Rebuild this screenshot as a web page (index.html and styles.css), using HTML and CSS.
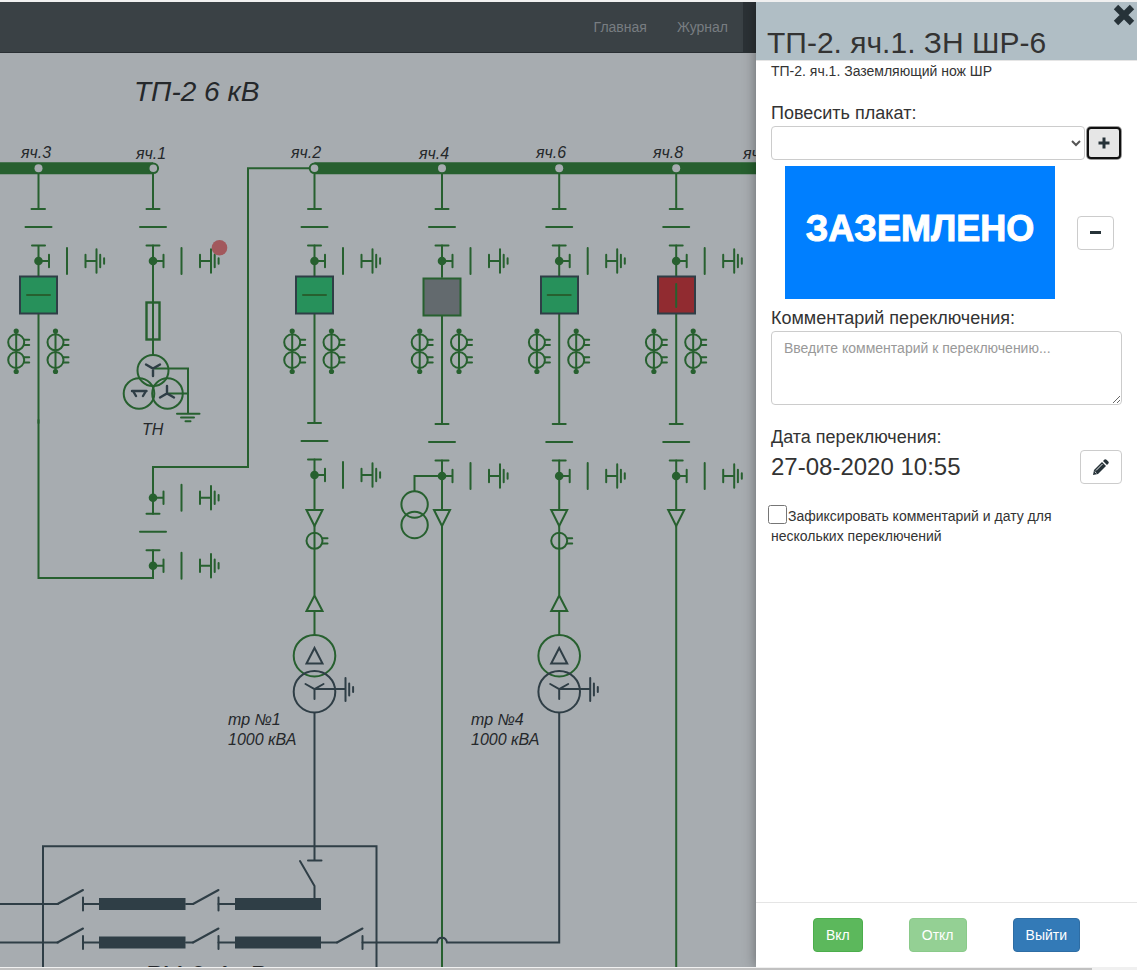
FILE: index.html
```html
<!DOCTYPE html>
<html lang="ru">
<head>
<meta charset="utf-8">
<title>ТП-2 6 кВ</title>
<link rel="stylesheet" href="styles.css">
</head>
<body>
<div class="app">
  <div class="workspace">
    <nav class="navbar">
      <a class="nav-link" href="#">Главная</a>
      <a class="nav-link" href="#">Журнал</a>
      <span class="nav-active"></span>
    </nav>
    <main class="canvas">
      <svg class="scheme" viewBox="0 53 756 914" preserveAspectRatio="xMinYMin slice" role="img" aria-label="Однолинейная схема ТП-2">
        <defs>
          <g id="earth">
            <circle class="fill" r="4.3"/>
            <path d="M0 0H10.500M10.500-6.300V6.300M28.500-13V13M47-6.300V6.300M47 0H58M58-11.700V11.700M61.700-6.300V6.300M65.600-2.700V2.700"/>
          </g>
          <path id="disc" d="M-6.500 0H6.500M-13 18H13M-6.500 36.500H6.500"/>
          <g id="ct">
            <circle class="fill" cy="-20" r="2.600"/><circle class="fill" cy="20.500" r="2.600"/>
            <circle cy="-8.700" r="8"/><circle cy="9" r="8"/>
            <path d="M0-20V20M8-11.300H13M8-6H13M8 6.300H13M8 11.600H13"/>
          </g>
          <g id="cell">
            <use href="#disc" y="209"/>
            <path d="M0 174V209M0 245.500V277M0 314V423"/>
            <use href="#earth" y="261"/>
            <use href="#ct" x="-22.300" y="351"/><use href="#ct" x="17" y="351"/>
          </g>
          <g id="feeder">
            <use href="#disc"/>
            <use href="#earth" y="52"/>
            <path d="M0 36.500V86"/>
          </g>
          <path id="cone" d="M-8 510H8L0 526Z"/>
          <g id="trafo">
            <path d="M0 526V595M0 611V635M8 538.300H13M8 543.500H13M-8 611H8L0 595.500Z"/>
            <circle cy="540.800" r="8"/>
            <circle cy="655.700" r="20.800"/>
            <g class="dark">
              <circle cy="691.700" r="20.800"/>
              <path d="M-8 663.500H8L0 648ZM-9 684L0 689L9 684M0 689V699M0 689H31M31 678V701M34.700 683.500V695.500M38.600 687V692"/>
            </g>
          </g>
          <path id="blade" d="M0 0L25.500-14M25.500-6.500V6.500"/>
        </defs>

        <path class="bus" d="M0 168.300H153M314.500 168.300H756"/>
        <g class="green">
          <path d="M38.500 420V578H153V566"/>
          <path d="M153 174V209M153 245.500V355"/>
          <use href="#disc" x="153" y="209"/>
          <use href="#earth" x="153" y="261"/>
          <rect class="winding" x="146.500" y="302.500" width="13" height="37"/>
          <circle cx="153" cy="370.500" r="15.500"/>
          <circle cx="139" cy="393.500" r="15.300"/>
          <circle cx="167.500" cy="393.500" r="15.300"/>
          <path d="M153 368.500H188V413M167 393.500H188M177 413.800H199.500M181 417.500H194M185.500 421.300H190.500"/>
          <path class="dark winding" d="M146 364.500L153 368.500L160 364.500M153 368.500V376M160 397.500L167 393.500L174 397.500M167 393.500V386M132 391H146.500M133 391L136 396M146 391L143 396"/>
          <path d="M309 168.300H248V467H153V513.700M153 550.200V578"/>
          <use href="#disc" x="153" y="513.700"/>
          <use href="#earth" x="153" y="497.700"/>
          <use href="#earth" x="153" y="565.700"/>

          <path d="M31.500 209H45M25.500 227H51.500M32 245.500H45M38.500 174V209M38.500 245.500V277M38.500 314V423"/>
          <use href="#earth" x="38.500" y="261"/>
          <use href="#ct" x="16.200" y="351"/><use href="#ct" x="55.500" y="351"/>
          <use href="#cell" x="314.500"/>
          <use href="#cell" x="442"/>
          <use href="#cell" x="559.200"/>
          <use href="#cell" x="676.200"/>
          <use href="#feeder" x="314.500" y="423"/>
          <use href="#feeder" x="442" y="424"/>
          <use href="#feeder" x="559.200" y="424"/>
          <use href="#feeder" x="676.200" y="424"/>
          <use href="#cone" x="314.500"/><use href="#cone" x="442"/><use href="#cone" x="559.200"/><use href="#cone" x="676.200"/>
          <use href="#trafo" x="314.500"/><use href="#trafo" x="559.200"/>
          <path d="M442 526V967M676.200 526V967M442 476H414.500V491"/>
          <circle cx="414.600" cy="504.500" r="13.200"/>
          <circle cx="414.600" cy="525" r="13.200"/>
        </g>

        <g class="breaker">
          <rect x="20" y="276.500" width="37" height="37"/>
          <rect x="296" y="276.500" width="37" height="37"/>
          <rect x="541" y="276.500" width="37" height="37"/>
          <rect class="closed" x="658" y="276.500" width="37" height="37"/>
          <rect class="unknown" x="423.500" y="278.500" width="37" height="37"/>
        </g>
        <path class="green" d="M27 295H50M303 295H326M547.700 295H570.700M676.200 284V307"/>

        <g class="joint">
          <circle cx="38.500" cy="168.300" r="4"/><circle cx="442" cy="168.300" r="4"/>
          <circle cx="559.200" cy="168.300" r="4"/><circle cx="676.200" cy="168.300" r="4"/>
          <circle class="ring" cx="153.300" cy="168.300" r="4.800"/><circle class="ring" cx="314.500" cy="168.300" r="4.800"/>
        </g>
        <circle class="marker" cx="219.500" cy="247.700" r="7.800"/>

        <g class="dark">
          <path d="M43 967V846.300H376.500V967M314.500 713V860.500M308 860.500H321.500M300 861L314.500 886V900"/>
          <path d="M0 904H58M83 904H99M186 904H193M218.500 904H235"/>
          <path d="M0 942.500H58M83 942.500H99M186 942.500H193M218.500 942.500H235M321 942.500H337M362.500 942.500H437C438 936 446 936 447 942.500H559.200V713"/>
          <use href="#blade" x="57.500" y="904"/><use href="#blade" x="193" y="904"/>
          <use href="#blade" x="57.500" y="942.500"/><use href="#blade" x="193" y="942.500"/><use href="#blade" x="337" y="942.500"/>
        </g>
        <path class="bus low" d="M99 904H185.500M235 904H321M99 942.500H185.500M235 942.500H321"/>

        <text class="caption" x="134" y="101">ТП-2 6 кВ</text>
        <text class="caption" x="144" y="985">РУ-0,4 кВ</text>
        <text x="21" y="158">яч.3</text>
        <text x="136" y="159">яч.1</text>
        <text x="291" y="158">яч.2</text>
        <text x="419" y="159">яч.4</text>
        <text x="536" y="158">яч.6</text>
        <text x="653" y="158">яч.8</text>
        <text x="743" y="159">яч.10</text>
        <text x="142" y="435">ТН</text>
        <text x="228" y="725">тр №1</text>
        <text x="228" y="745">1000 кВА</text>
        <text x="471" y="725">тр №4</text>
        <text x="471" y="745">1000 кВА</text>
      </svg>
    </main>
  </div>

  <aside class="panel">
    <header class="panel-head">
      <h1 class="panel-title">ТП-2. яч.1. ЗН ШР-6</h1>
      <button class="close" type="button" aria-label="Закрыть">
        <svg width="22" height="22" viewBox="0 0 22 22"><path d="M3 3L19 19M19 3L3 19" stroke="#263238" stroke-width="6.200"/></svg>
      </button>
    </header>
    <form class="panel-body">
      <p class="subtitle">ТП-2. яч.1. Заземляющий нож ШР</p>
      <label class="label" for="poster">Повесить плакат:</label>
      <div class="poster-row">
        <select class="control select" id="poster"><option></option></select>
        <button class="btn add" type="button" aria-label="Добавить">
          <svg width="14" height="14" viewBox="0 0 14 14"><path d="M7 1.500V12.500M1.500 7H12.500" stroke="#263238" stroke-width="3"/></svg>
        </button>
      </div>
      <div class="placard-row">
        <div class="placard">ЗАЗЕМЛЕНО</div>
        <button class="btn remove" type="button" aria-label="Снять">
          <svg width="13" height="14" viewBox="0 0 13 14"><path d="M1 6.500H12" stroke="#263238" stroke-width="3"/></svg>
        </button>
      </div>
      <label class="label" for="comment">Комментарий переключения:</label>
      <textarea class="control comment" id="comment" placeholder="Введите комментарий к переключению..."></textarea>
      <div class="date-row">
        <div>
          <div class="label">Дата переключения:</div>
          <div class="date">27-08-2020 10:55</div>
        </div>
        <button class="btn edit" type="button" aria-label="Изменить дату">
          <svg width="16" height="16" viewBox="0 0 16 16"><path d="M0 16L1 11L9 3L13 7L5 15ZM10 2L11.500 .6Q12.500 -.2 13.500 .7L15.300 2.500Q16.200 3.500 15.400 4.500L14 6Z" fill="#263238"/><path d="M3 11.500L9.500 5M1.700 12.500L3.500 14.300" stroke="#fff" stroke-width=".9"/></svg>
        </button>
      </div>
      <label class="check"><input class="check-box" type="checkbox">Зафиксировать комментарий и дату для нескольких переключений</label>
    </form>
    <footer class="panel-foot">
      <button class="btn success" type="button">Вкл</button>
      <button class="btn success" type="button" disabled>Откл</button>
      <button class="btn primary" type="button">Выйти</button>
    </footer>
  </aside>
  <div class="scrollbar"><div class="thumb"></div></div>
</div>
</body>
</html>
```
FILE: styles.css
```css
* { box-sizing: border-box; }

body {
  margin: 0;
  font: 14px/20px "Liberation Sans", Arial, sans-serif;
  color: #333;
  background: #f0f0f0;
}

.app {
  display: grid;
  grid-template-columns: minmax(0, 1fr) 381px;
  grid-template-rows: minmax(0, 1fr) 3px;
  height: 100vh;
  padding-top: 2px;
}

.workspace {
  display: flex;
  flex-direction: column;
  min-width: 0;
  min-height: 0;
  background: #a7acb0;
}

.navbar {
  display: flex;
  align-items: center;
  justify-content: flex-end;
  height: 51px;
  flex: none;
  background: #3a4145;
  border-bottom: 1px solid #2a3034;
}

.nav-link {
  padding: 0 15px;
  color: #787d81;
  text-decoration: none;
}

.nav-active {
  align-self: stretch;
  width: 13px;
  background: #2b3135;
}

.canvas {
  flex: 1;
  min-height: 0;
  overflow: hidden;
}

.scheme {
  display: block;
  width: 100%;
  height: 100%;
  fill: none;
  stroke-width: 2;
}

.green { stroke: #27602f; stroke-linecap: round; }
.fill { fill: #27602f; stroke: none; }
.dark { stroke: #2f3e46; stroke-linecap: round; }
.winding { stroke-width: 2.4; }
.bus { stroke: #27602f; stroke-width: 12; }
.low { stroke: #2f3e46; }
.breaker { fill: #27915b; stroke: #2f3e46; }
.breaker .closed { fill: #912b30; }
.breaker .unknown { fill: #636a6e; stroke: #27602f; }
.joint { fill: #a7acb0; }
.joint .ring { stroke: #27602f; }
.marker { fill: #a2585c; }

.scheme text {
  fill: #25282b;
  font-size: 16px;
  font-style: italic;
}

.scheme .caption { font-size: 28px; }

.panel {
  z-index: 1;
  display: flex;
  flex-direction: column;
  min-height: 0;
  background: #fff;
  box-shadow: 0 0 12px rgba(0, 0, 0, .4);
  clip-path: inset(0 0 0 -20px);
}

.panel-head {
  display: flex;
  align-items: flex-end;
  justify-content: space-between;
  height: 59px;
  padding-left: 11px;
  background: #b0bec5;
  border-bottom: 1px solid #e5e5e5;
}

.panel-title {
  margin: 0;
  font-size: 30px;
  font-weight: 400;
  line-height: 34px;
}

.close {
  align-self: flex-start;
  height: 24px;
  padding: 2px 2px 0 0;
  border: 0;
  background: none;
}

.panel-body {
  flex: 1;
  padding: 0 15px;
}

.subtitle { margin: 0 0 22px; }

.label {
  display: block;
  font-size: 18px;
  line-height: 20px;
}

.control {
  border: 1px solid #ccc;
  border-radius: 4px;
  background: #fff;
  color: #555;
  font: inherit;
}

.btn {
  display: flex;
  align-items: center;
  justify-content: center;
  height: 34px;
  padding: 6px 12px;
  border: 1px solid #ccc;
  border-radius: 4px;
  background: #fff;
  color: #333;
  font: inherit;
}

.poster-row {
  display: flex;
  gap: 1px;
  margin-top: 3px;
}

.select {
  flex: 1;
  height: 34px;
}

.add {
  width: 34px;
  height: 32px;
  margin: 1px;
  padding: 0;
  border: 2px solid #101010;
  background: #e6e6e6;
  box-shadow: 0 0 0 1px #999;
}

.placard-row {
  display: flex;
  align-items: center;
  justify-content: space-between;
  padding: 6px 8px 9px 14px;
}

.placard {
  width: 270px;
  height: 133px;
  background: #007fff;
  color: #fff;
  font-size: 36px;
  font-weight: 700;
  line-height: 125px;
  text-align: center;
  -webkit-text-stroke: 1px #fff;
}

.remove {
  width: 37px;
  padding: 0;
}

.comment {
  display: block;
  width: 100%;
  height: 74px;
  margin-top: 3px;
  padding: 6px 12px;
}

.comment::placeholder { color: #999; }

.date-row {
  display: flex;
  align-items: flex-end;
  justify-content: space-between;
  margin-top: 22px;
}

.date {
  margin-top: 5px;
  padding-bottom: 2px;
  font-size: 24px;
  line-height: 30px;
}

.edit { width: 42px; }

.check {
  display: block;
  margin-top: 22px;
  padding-right: 50px;
}

.check-box {
  width: 19px;
  height: 19px;
  margin: -4px 1px 0 -3px;
  vertical-align: -3px;
}

.panel-foot {
  display: flex;
  justify-content: center;
  gap: 46px;
  padding: 15px;
  border-top: 1px solid #e5e5e5;
}

.success {
  border-color: #4cae4c;
  background: #5cb85c;
  color: #fff;
}

.primary {
  border-color: #2e6da4;
  background: #337ab7;
  color: #fff;
}

.btn:disabled { opacity: .65; }

.scrollbar {
  grid-column: 1 / -1;
  padding-top: 1px;
  background: #f0f0f0;
}

.thumb {
  width: 96%;
  height: 2px;
  background: #c1c1c1;
}
```
